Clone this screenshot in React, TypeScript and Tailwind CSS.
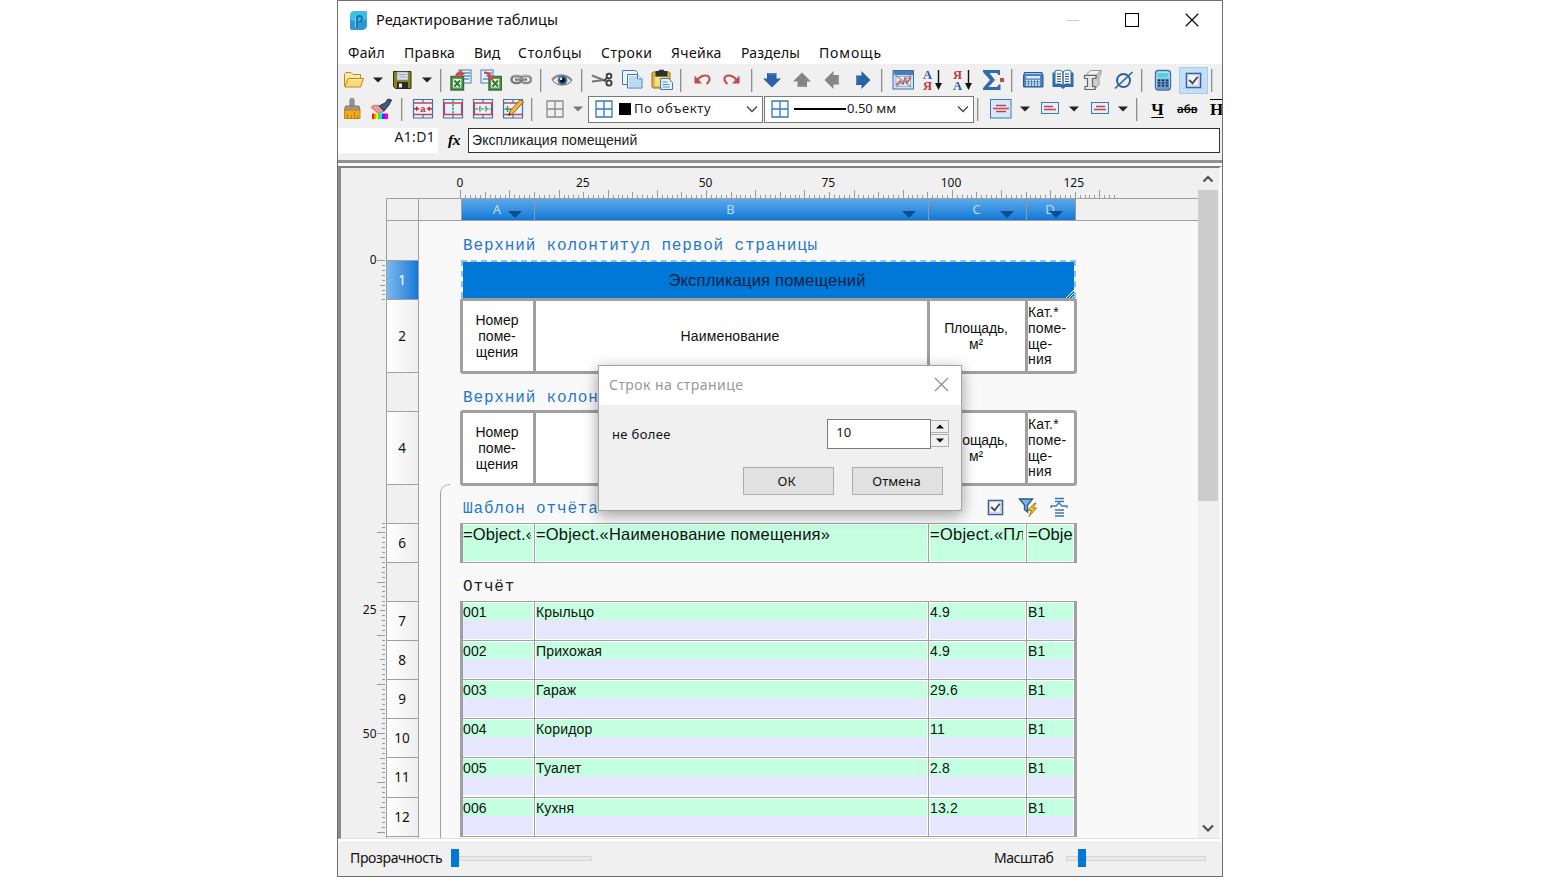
import type { ReactNode } from "react";

const MENU = [
  { label: "Файл", cls: "w-[56px] tracking-[0.200px]" },
  { label: "Правка", cls: "w-[70px] tracking-[0.300px]" },
  { label: "Вид", cls: "w-[44px]" },
  { label: "Столбцы", cls: "w-[83px] tracking-[0.700px]" },
  { label: "Строки", cls: "w-[70px] tracking-[0.500px]" },
  { label: "Ячейка", cls: "w-[70px] tracking-[0.350px]" },
  { label: "Разделы", cls: "w-[78px] tracking-[0.200px]" },
  { label: "Помощь", cls: "w-[70px] tracking-[0.850px]" },
];

const REPORT = [
  { id: "001", name: "Крыльцо", area: "4.9", cat: "B1", h: "h-[39px]" },
  { id: "002", name: "Прихожая", area: "4.9", cat: "B1", h: "h-[39px]" },
  { id: "003", name: "Гараж", area: "29.6", cat: "B1", h: "h-[39px]" },
  { id: "004", name: "Коридор", area: "11", cat: "B1", h: "h-[39px]" },
  { id: "005", name: "Туалет", area: "2.8", cat: "B1", h: "h-[40px]" },
  { id: "006", name: "Кухня", area: "13.2", cat: "B1", h: "h-[39px]" },
];

const ROW_HEADS = [
  { n: "", h: "h-[40px]" },
  { n: "1", h: "h-[39px]" },
  { n: "2", h: "h-[73px]" },
  { n: "", h: "h-[39px]" },
  { n: "4", h: "h-[73px]" },
  { n: "", h: "h-[39px]" },
  { n: "6", h: "h-[39px]" },
  { n: "", h: "h-[39px]" },
  { n: "7", h: "h-[39px]" },
  { n: "8", h: "h-[39px]" },
  { n: "9", h: "h-[39px]" },
  { n: "10", h: "h-[39px]" },
  { n: "11", h: "h-[40px]" },
  { n: "12", h: "h-[39px]" },
];

// vertical scale is broken by the section captions
const V_SEGMENTS = [
  { from: 0, to: 8, y: 92 },
  { from: 8, to: 24, y: 354.5 },
  { from: 24, to: 70, y: 437.2 },
];

function Svg({ children, w = 22, h = 22, cls = "" }: { children: ReactNode; w?: number; h?: number; cls?: string }) {
  return (
    <svg width={w} height={h} viewBox={`0 0 ${w} ${h}`} fill="none" className={`shrink-0 ${cls}`}>
      {children}
    </svg>
  );
}

function Sep({ cls = "" }: { cls?: string }) {
  return <div className={`h-[23px] w-[2px] shrink-0 border-r border-[#d0d0d0] bg-[#8d8d8d] ${cls}`} />;
}

function Caret({ color = "#222", cls = "" }: { color?: string; cls?: string }) {
  return (
    <Svg w={10} h={6} cls={cls}>
      <path d="M0 .5h10L5 5.5z" fill={color} />
    </Svg>
  );
}

function Chevron({ dir = "down", color = "#444", w = 1.3 }: { dir?: "down" | "up"; color?: string; w?: number }) {
  return (
    <Svg w={12} h={8}>
      <path d={dir === "down" ? "M1 1.500l5 5 5-5" : "M1.500 6.500L6 2l4.500 4.500"} stroke={color} strokeWidth={w} />
    </Svg>
  );
}

function FolderIcon() {
  return (
    <Svg>
      <path d="M1.500 17V5.500L3 3.500h5l2 2h7.500v4" fill="#fbe9a8" stroke="#b98a1e" />
      <path d="M1.800 18L5 9.500h15.500l-3 8.500z" fill="#fdd97a" stroke="#b98a1e" strokeLinejoin="round" />
      <path d="M6 10.800h13" stroke="#fff2c0" />
    </Svg>
  );
}

function SaveIcon() {
  return (
    <Svg>
      <path d="M2.500 2.500h17.500v17H4.500l-2-2z" fill="#85851f" stroke="#2e2e10" />
      <rect x="6" y="3" width="11" height="8" fill="#dfe6ee" stroke="#888" strokeWidth=".6" />
      <path d="M7.500 5.500h8M7.500 8h8" stroke="#8fa6c4" />
      <rect x="6" y="13" width="11" height="6.500" fill="#2b2b2b" />
      <rect x="8" y="14.500" width="3" height="4" fill="#f2f2f2" />
    </Svg>
  );
}

function ExcelIcon({ out }: { out?: boolean }) {
  const bx = out ? 1 : 9;
  const px = out ? 9 : 1;
  return (
    <Svg>
      <rect x={px} y="1" width="12" height="13" fill="#eef5ff" stroke="#4478b4" />
      <path d={`M${px + 5} 4h6M${px + 5} 7h6M${px + 2} 10h8`} stroke="#5b8fd0" strokeWidth="1.300" />
      <rect x={bx} y="7.500" width="12.500" height="13.500" fill="#5c9955" stroke="#2f6a31" strokeWidth="1.400" />
      <rect x={bx + 2.2} y="10" width="8" height="8.500" fill="#e9f6e4" />
      <path d={`M${bx + 3.5} 11.500l5.500 6M${bx + 9} 11.500l-5.500 6`} stroke="#2c7a35" strokeWidth="1.900" />
      {out ? (
        <path d="M5 8.500c0-4 2-5.500 5-5.500V.5l5 4.200-5 4V6C8.500 6 7.500 6.500 7 8.500z" fill="#cf4a4f" />
      ) : (
        <path d="M4 2.500c4 0 6.500 1 7.500 4.500l2.200-1-.7 6-5.500-2.500 2-1C8.500 6 7 4.800 4 4.800z" fill="#cf4a4f" />
      )}
    </Svg>
  );
}

function LinkIcon() {
  return (
    <Svg>
      <rect x="1.500" y="7" width="10" height="7" rx="3.500" stroke="#7a7a7a" strokeWidth="2.400" />
      <rect x="11" y="7" width="10" height="7" rx="3.500" stroke="#8b8b8b" strokeWidth="2.400" />
      <path d="M5 10.500h12" stroke="#5f5f5f" strokeWidth="2.200" />
      <path d="M3 7c1.500-1 5.500-1 7 0M13 7c1.500-1 5-1 6.500 0M6 10h10" stroke="#cfcfcf" strokeWidth=".8" />
    </Svg>
  );
}

function EyeIcon() {
  return (
    <Svg>
      <path d="M1.500 11.500C5 6 16 5 20.500 12 16 17.500 6 17.500 1.500 11.500z" fill="#e9e9e9" stroke="#666" />
      <path d="M1 10.500C5 4.500 16 4 21 11.500" stroke="#8a8a8a" strokeWidth="1.600" />
      <circle cx="11.500" cy="11.200" r="4.800" fill="#3f6a94" />
      <circle cx="11.500" cy="11.200" r="2.700" fill="#0b1a2b" />
      <circle cx="10" cy="9.800" r="1.200" fill="#fff" />
    </Svg>
  );
}

function ScissorsIcon() {
  return (
    <Svg>
      <path d="M1 6.500l14 5.500M1 12.500l13-1.500" stroke="#777" strokeWidth="2" />
      <circle cx="18" cy="7" r="2.400" stroke="#3a3a3a" strokeWidth="1.800" />
      <circle cx="18" cy="14" r="2.600" stroke="#3a3a3a" strokeWidth="1.800" />
      <path d="M13 12l3-3.500" stroke="#3a3a3a" strokeWidth="1.800" />
    </Svg>
  );
}

function CopyIcon() {
  return (
    <Svg>
      <path d="M1.500 1.500h13l2 2v12h-15z" fill="#e9f4fe" stroke="#3d78b8" />
      <path d="M6.500 5.500h10l4.500 4.500v9h-14.500z" fill="#f4faff" stroke="#3d78b8" />
      <path d="M8 7h8v4h4v7H8z" fill="#b9dbf6" />
      <path d="M16.500 5.500v4.500h4.500" fill="#fff" stroke="#3d78b8" />
    </Svg>
  );
}

function PasteIcon() {
  return (
    <Svg>
      <rect x="1" y="3" width="18" height="16" rx="1.500" fill="#dcb93f" stroke="#93741c" />
      <path d="M4.500 2h3L8.500.8h4L13.500 2h3v5.500h-12z" fill="#2f2f2f" />
      <rect x="4" y="8" width="12" height="9" fill="#f6df85" />
      <path d="M9.500 9.500h8l4 4v7h-12z" fill="#e4f1fd" stroke="#3d78b8" />
      <path d="M11.500 13h5M11.500 15.500h7M11.500 18h7" stroke="#5b8fd0" />
    </Svg>
  );
}

function UndoIcon({ flip }: { flip?: boolean }) {
  return (
    <Svg cls={flip ? "-scale-x-100" : ""}>
      <path d="M6 11.500C9 6.500 16 5 18 8c1.500 3 0 5-2.500 7" stroke="#c5484c" strokeWidth="2" />
      <path d="M3.500 6.500v8H11z" fill="#c5484c" />
    </Svg>
  );
}

function ArrowIcon({ cls = "", blue }: { cls?: string; blue?: boolean }) {
  return (
    <Svg cls={cls}>
      <path d="M6 4h9.500v5.500h4.500L11 18.500 2 9.500h4z" fill={blue ? "#2c62a8" : "#858585"} />
      <path d="M7 4.800h7.500" stroke={blue ? "#5b8ccb" : "#9c9c9c"} strokeWidth="1.200" />
    </Svg>
  );
}

function PictureIcon() {
  return (
    <Svg>
      <rect x="1" y="1.500" width="20.500" height="18.500" fill="#cfe4f6" stroke="#3a6ea8" />
      <rect x="1.500" y="2" width="19.500" height="4" fill="#4a80ba" />
      <path d="M4 7.500h14.500v10H4z" fill="#e9eef6" stroke="#88a" strokeWidth=".6" />
      <path d="M4 16l4-4 3 3 2-6 2 5 4-6" stroke="#c9474b" strokeWidth="1.400" />
      <path d="M2 5l17 13M19 6L4 18" stroke="#8a9bb0" strokeWidth="1.300" />
    </Svg>
  );
}

function SortIcon({ a, b, up, down }: { a: string; b: string; up: string; down: string }) {
  return (
    <Svg>
      <text x="5.500" y="10" textAnchor="middle" fontFamily="Liberation Serif" fontWeight="700" fontSize="12.500" fill={up}>{a}</text>
      <text x="5.500" y="20.500" textAnchor="middle" fontFamily="Liberation Serif" fontWeight="700" fontSize="12.500" fill={down}>{b}</text>
      <path d="M16.500 1v16" stroke="#111" strokeWidth="1.400" />
      <path d="M13 14h7l-3.500 7z" fill="#111" />
    </Svg>
  );
}

function SigmaIcon() {
  return (
    <Svg>
      <path d="M1 1h17v5h-1.500L15 4H7.500l5.500 7-6.500 7H15l1.800-2.500H18.500V21H1v-2l7-8-7-8z" fill="#2f6ca8" />
      <rect x="18" y="9" width="4" height="4" fill="#c9474b" />
    </Svg>
  );
}

function KeypadIcon() {
  return (
    <Svg>
      <path d="M2.500 3.500h17.500l1 3V18h-19.500V6.500z" fill="#4a82c2" stroke="#23558f" strokeLinejoin="round" />
      <path d="M3 4.500h16.500" stroke="#a9cbee" />
      <rect x="4" y="7" width="14" height="2.500" fill="#dbeafa" />
      {[11.5, 13.8, 16].map((y) => (
        <path key={y} d={`M4 ${y}h14`} stroke="#e6f1fc" strokeWidth="1.300" strokeDasharray="2 1" />
      ))}
    </Svg>
  );
}

function BookIcon() {
  return (
    <Svg>
      <path d="M.5 3.500h21v14.500h-8l-2.500 2-2.500-2H.5z" fill="#2f6cab" />
      <path d="M3 2c3-1.500 6-1 8 1v13.500c-2-2-5-2-8-1zM19 2c-3-1.500-6-1-8 1v13.500c2-2 5-2 8-1z" fill="#f2f8fe" stroke="#2f6cab" />
      <path d="M5 5h4M5 7.500h4M5 10h4M5 12.500h4M13 5h4M13 7.500h4M13 10h4M13 12.500h4" stroke="#444" />
    </Svg>
  );
}

function BeamIcon() {
  return (
    <Svg>
      <path d="M3.500 6l5-4.500H19L15 6z" fill="#f0f0f0" stroke="#9a9a9a" />
      <path d="M15 6l4-4.500v4l-2 2.500v7.500L13 20v-3l-2.500 1V9.500L15 9z" fill="#cfcfcf" stroke="#9a9a9a" />
      <path d="M2.500 6.500h11.500v3H10.500v8H13v3H3v-3h2.500v-8h-3z" fill="#e9e9e9" stroke="#666" strokeWidth="1.200" />
    </Svg>
  );
}

function DiameterIcon() {
  return (
    <Svg>
      <circle cx="10.500" cy="11.500" r="6.500" stroke="#2f6299" strokeWidth="2" />
      <path d="M2 19.500L19.500 3" stroke="#2f6299" strokeWidth="1.700" />
    </Svg>
  );
}

function CalculatorIcon() {
  return (
    <Svg>
      <rect x="3.500" y="1.500" width="15" height="19.500" rx="3" fill="#c6dcf2" stroke="#3c73ad" strokeWidth="1.400" />
      <path d="M5 9.500h12V20H5z" fill="#6f9cca" />
      <rect x="5.500" y="4" width="11" height="4.500" fill="#46d3e6" />
      {[11.3, 14, 16.700].map((y) => (
        <path key={y} d={`M5.800 ${y}h11`} stroke="#16355c" strokeWidth="1.700" strokeDasharray="2.500 1.500" />
      ))}
    </Svg>
  );
}

function CheckIcon({ s = 18 }: { s?: number }) {
  return (
    <svg width={s} height={s} viewBox="0 0 18 18" fill="none" className="shrink-0">
      <rect x="1.500" y="1.500" width="15" height="15" fill="#cdd6f0" stroke="#3d6296" strokeWidth="1.500" />
      <path d="M3.500 3.500h10v10h-10z" fill="#f6f8fd" />
      <path d="M4.500 8.500L8 12l5.500-7" stroke="#4a4a4a" strokeWidth="2" />
    </svg>
  );
}

function BrushIcon() {
  return (
    <Svg>
      <path d="M8 2q0-1.500 2-1.500t2 1.500v6H8z" fill="#9a9a9a" stroke="#777" />
      <path d="M3.500 8h13.500l1 4H2.500z" fill="#999" stroke="#777" />
      <path d="M2.500 12h15.500v8.500h-15.500z" fill="#f0ab1c" stroke="#c48812" />
      <path d="M5.500 21v-5M9.500 21v-4M12.500 21v-7M15.500 21v-4" stroke="#b57b0e" />
    </Svg>
  );
}

function PaletteIcon() {
  const hues = ["#ff1e00", "#ff9a00", "#fff000", "#2cff00", "#00e6ff", "#1448ff", "#b400ff", "#ff00a0"];
  return (
    <Svg>
      {hues.map((c, i) => (
        <rect key={c} x={2 + i * 2} y="15.500" width="2" height="5.500" fill={c} />
      ))}
      <path d="M1 9.500c2-3 7-3 9.500-.5l4 4-6 2.500-3-2.500z" fill="#e99a9a" stroke="#c07070" />
      <path d="M9 8l6-3 3-4 3.500 1-2.500 5-5 6z" fill="#3c5a80" stroke="#20364f" />
    </Svg>
  );
}

function TableIcon({ kind }: { kind: "text" | "cols" | "cells" | "edit" }) {
  return (
    <Svg>
      <rect x="1" y="1.500" width="20" height="18.500" fill="#e6f2fd" />
      <path d="M1.500 1.500v18.500M20.500 1.500v18.500M1 1.500h20M1 20h20M11 1.500v3M11 16.500v3" stroke="#3a74b0" strokeWidth="1.200" />
      <path d="M1 5h20M1 16.500h20" stroke="#cc4147" strokeWidth="1.500" />
      {kind === "text" && (
        <>
          <path d="M2 10.800h4M16 10.800h4" stroke="#cc2a30" strokeWidth="1.600" />
          <path d="M4 8.300l3.500 2.500L4 13.300zM18 8.300l-3.500 2.500 3.500 2.500z" fill="#cc2a30" />
          <text x="11" y="13.800" textAnchor="middle" fontFamily="Liberation Sans" fontWeight="700" fontSize="9.500" fill="#cc2a30">a</text>
        </>
      )}
      {kind === "cols" && (
        <>
          <path d="M2.500 5v11.500M19.500 5v11.500" stroke="#cc4147" strokeWidth="1.200" />
          <path d="M11 6v9.500" stroke="#3f8f4b" strokeWidth="1.400" strokeDasharray="2.500 1" />
        </>
      )}
      {kind === "cells" && (
        <>
          <path d="M2.500 5v11.500M19.500 5v11.500" stroke="#cc4147" strokeWidth="1.200" />
          <path d="M3.500 10.800H8M14 10.800h4.500M8 8v5.500M14 8v5.500M9 10.800h4" stroke="#3f8f4b" strokeWidth="1.300" strokeDasharray="2.500 1" />
        </>
      )}
      {kind === "edit" && (
        <>
          <path d="M2.500 11h7M5.500 8v6" stroke="#3f8f4b" strokeWidth="1.300" />
          <path d="M18.500 1.500l3 2.500L11 15.500l-4.500 2 1.500-4.500z" fill="#f2b93a" stroke="#8a5c12" />
          <path d="M6.500 17.500l.8-2.500 1.700 1.300z" fill="#222" />
        </>
      )}
    </Svg>
  );
}

function GridIcon({ color }: { color: string }) {
  return (
    <Svg w={18} h={18}>
      <path d="M1 1h16v16H1zM9 1v16M1 9h16" stroke={color} strokeWidth="1.300" fill={color === "#8a8a8a" ? "none" : "#f4faff"} />
    </Svg>
  );
}

function AlignIcon({ big, shift = 0 }: { big?: boolean; shift?: number }) {
  return big ? (
    <Svg w={22} h={20}>
      <rect x=".5" y=".5" width="20.500" height="18.500" fill="#d5e8fa" stroke="#3d78b8" />
      <path d="M6 6.500h10M3 9.500h16M6 12.500h10" stroke="#cc4147" strokeWidth="1.400" />
    </Svg>
  ) : (
    <Svg w={18} h={14}>
      <rect x=".5" y="1.500" width="17" height="11" fill="#e3f0fc" stroke="#3d78b8" />
      <path d={`M${3 + shift} 5.500h9M3 8.500h12`} stroke="#cc4147" strokeWidth="1.300" />
    </Svg>
  );
}

function Logo() {
  return (
    <Svg w={19} h={21}>
      <path d="M5.500 1H18v13q0 6-6 6H3.500Q1 20 1 17.500V6q0-5 4.500-5z" fill="#3fbdea" />
      <path d="M1 10q9 3 17-1v5q0 6-6 6H3.500Q1 20 1 17.500z" fill="#2f96d2" />
      <path d="M8 17V8.500Q8 6 10.500 6T13 8.500 10.500 12" stroke="#1c6ea6" strokeWidth="1.800" />
      <path d="M6.500 17V8" stroke="#8fdcf5" strokeWidth=".9" />
    </Svg>
  );
}

function HRuler() {
  const ticks = Array.from({ length: 134 }, (_, v) => v);
  return (
    <svg width="811" height="30" className="block">
      {ticks.map((v) => {
        const x = Math.round(74.3 + v * 4.915) + 0.5;
        const len = v % 10 === 0 ? 8 : v % 5 === 0 ? 6 : 3;
        return <path key={v} d={`M${x} 30v-${len}`} stroke="#9a9a9a" />;
      })}
      {[0, 25, 50, 75, 100, 125].map((v) => (
        <text key={v} x={74 + v * 4.91} y="19" textAnchor="middle" fontFamily="Noto Sans" fontSize="12" fill="#111">
          {v}
        </text>
      ))}
    </svg>
  );
}

function VRuler() {
  return (
    <svg width="45" height="671" className="block shrink-0">
      {V_SEGMENTS.map((s) =>
        Array.from({ length: s.to - s.from + 1 }, (_, i) => s.from + i).map((v) => {
          const y = Math.round(s.y + (v - s.from) * 4.92) + 0.5;
          const len = v % 10 === 0 ? 8 : v % 5 === 0 ? 5 : 3;
          return <path key={`${s.y}-${v}`} d={`M44 ${y}h-${len}`} stroke="#9a9a9a" />;
        })
      )}
      <text x="35.500" y="96" textAnchor="end" fontFamily="Noto Sans" fontSize="12" fill="#111">0</text>
      <text x="35.500" y="446" textAnchor="end" fontFamily="Noto Sans" fontSize="12" fill="#111">25</text>
      <text x="35.500" y="570" textAnchor="end" fontFamily="Noto Sans" fontSize="12" fill="#111">50</text>
    </svg>
  );
}

function ColHead({ label, cls }: { label: string; cls: string }) {
  return (
    <div className={`relative h-[21px] border-r border-[#8f9aa5] bg-linear-to-b from-[#5aa9ea] to-[#0a78d6] pr-[2px] text-center font-['Noto_Sans'] text-[13px] leading-[21px] text-[#b5dcfb] ${cls}`}>
      {label}
      <svg width="14" height="7" className="absolute right-[12px] top-[12px]">
        <path d="M0 0h14L7 7z" fill="#0a4f93" />
      </svg>
    </div>
  );
}

function Caption({ children, cls = "" }: { children: ReactNode; cls?: string }) {
  return (
    <div className={`flex items-center whitespace-pre pl-[3px] font-['Liberation_Mono'] text-[16px] leading-5 tracking-[0.840px] ${cls}`}>
      {children}
    </div>
  );
}

function HeaderRow() {
  return (
    <div className="flex h-[76px] w-[617px] rounded-[3px] border-[3px] border-[#a0a0a0] bg-white text-center font-['Liberation_Sans'] text-[14px] leading-[15.700px] text-[#111]">
      <div className="flex w-[73px] items-center justify-center border-r-[3px] border-[#a0a0a0] pr-[2px] pt-[2px]">
        Номер<br />поме-<br />щения
      </div>
      <div className="flex w-[394px] items-center justify-center border-r-[3px] border-[#a0a0a0] pr-[3px] pt-[2px] tracking-[0.150px]">Наименование</div>
      <div className="flex w-[98px] items-center justify-center border-r-[3px] border-[#a0a0a0] pr-[3px] pt-[2px] tracking-[-0.150px]">
        <p>Площадь,<br />м²</p>
      </div>
      <div className="flex items-center pt-px text-left tracking-[0.200px]">
        <p>Кат.*<br />поме-<br />ще-<br />ния</p>
      </div>
    </div>
  );
}

function FormulaCell({ children, cls }: { children: ReactNode; cls: string }) {
  return (
    <div className={`border border-white bg-[#c4ffe0] ${cls}`}>
      <div className="overflow-hidden whitespace-nowrap">{children}</div>
    </div>
  );
}

function ReportCell({ children, cls }: { children: ReactNode; cls: string }) {
  return (
    <div className={`border-r border-[#a0a0a0] p-px ${cls}`}>
      <div className="h-[17px] bg-[#c4ffe0] leading-[18px]">{children}</div>
      <div className="h-[19px] bg-[#e6e6ff]" />
    </div>
  );
}

function Sheet() {
  return (
    <div className="flex h-[618px] w-[779px] overflow-hidden bg-[#f9f9f9]">
      <div className="w-[41px] shrink-0 pl-[21px] pt-[263px]">
        <div className="h-[400px] w-[11px] rounded-tl-[9px] border-l border-t border-[#a0a0a0] [mask-image:linear-gradient(to_right,black_80%,transparent)]" />
      </div>
      <div className="flex w-[617px] shrink-0 flex-col">
        <Caption cls="h-[39px] shrink-0 pt-[11px] text-[#2878c8]">Верхний колонтитул первой страницы</Caption>
        <div className="relative ml-px h-[38px] w-[615px] shrink-0 border-2 border-b-0 border-dashed border-[#8cc0e8] bg-white">
          <div className="flex h-full items-center justify-center bg-[#0078d7] pr-[3px] font-['Liberation_Sans'] text-[16.500px] tracking-[0.200px] text-[#06213f]">
            Экспликация помещений
          </div>
          <svg width="8" height="8" className="absolute bottom-0 right-0">
            <path d="M0 8L8 0M3 8l5-5M6 8l2-2" stroke="#fff" />
          </svg>
        </div>
        <div className="shrink-0">
          <HeaderRow />
        </div>
        <Caption cls="h-[36px] shrink-0 pt-[11px] text-[#2878c8]">Верхний колонтитул</Caption>
        <div className="shrink-0">
          <HeaderRow />
        </div>
        <Caption cls="h-[37px] shrink-0 pt-[9px] text-[#2878c8]">
          <span className="w-[524px]">Шаблон отчёта</span>
          <div className="flex items-center gap-[14px] pb-[4px]">
            <CheckIcon s={17} />
            <svg width="20" height="20" viewBox="0 0 20 20">
              <path d="M1.500 2h13l-5 6v7l-3-2.500V8z" fill="#7fb4e4" stroke="#27598f" strokeWidth="1.400" />
              <path d="M16.500 6l-7 7.500h4l-2.500 6 7.500-8.500h-3.500l3-5z" fill="#f5c21c" stroke="#8a6508" strokeWidth=".8" />
            </svg>
            <svg width="18" height="20" viewBox="0 0 18 20" fill="none" className="-ml-[2px]" stroke="#3a78b4" strokeWidth="1.300">
              <path d="M5 1.500h9M5 4.500h9M1 11V9h5l3-3 3 3h5v2M5 13h9M5 16h9M5 19h9" />
            </svg>
          </div>
        </Caption>
        <div className="flex h-[40px] w-[617px] shrink-0 gap-px border-x-[3px] border-y border-[#a0a0a0] bg-[#a0a0a0] font-['Liberation_Sans'] text-[16.500px] leading-[19px] text-[#111]">
          <FormulaCell cls="w-[71px] border-l-0 pr-[2px] tracking-[0.100px]">=Object.«Номер</FormulaCell>
          <FormulaCell cls="w-[393px] tracking-[0.200px]">=Object.«Наименование помещения»</FormulaCell>
          <FormulaCell cls="w-[97px] pr-[2px] tracking-[0.250px]">=Object.«Площадь»</FormulaCell>
          <FormulaCell cls="w-[47px] tracking-[0.050px]">=Obje</FormulaCell>
        </div>
        <Caption cls="h-[38px] shrink-0 pt-[10px] text-[#222]">Отчёт</Caption>
        <div className="w-[617px] shrink-0 border-x-[3px] border-t border-[#a0a0a0] bg-white font-['Liberation_Sans'] text-[14px] tracking-[0.150px] text-[#111]">
          {REPORT.map((r) => (
            <div key={r.id} className={`flex border-b border-[#a0a0a0] ${r.h}`}>
              <ReportCell cls="w-[72px] pl-0">{r.id}</ReportCell>
              <ReportCell cls="w-[394px]">{r.name}</ReportCell>
              <ReportCell cls="w-[98px]">{r.area}</ReportCell>
              <ReportCell cls="w-[47px] border-r-0">{r.cat}</ReportCell>
            </div>
          ))}
        </div>
      </div>
    </div>
  );
}

function Dialog() {
  return (
    <div className="absolute left-[260px] top-[364px] h-[146px] w-[364px] border border-[#a3a3a3] bg-[#f0f0f0] font-['Noto_Sans'] text-[13px] text-[#111] shadow-[0_4px_14px_rgba(0,0,0,0.38)]">
      <div className="flex h-[39px] items-center justify-between bg-white pl-[10px] pr-[12px] text-[14px] text-[#999]">
        <span className="-mt-[2px] tracking-[0.450px]">Строк на странице</span>
        <Svg w={15} h={15} cls="-mt-[3px]">
          <path d="M1 1l13 13M14 1L1 14" stroke="#8a8a8a" strokeWidth="1.100" />
        </Svg>
      </div>
      <div className="flex pl-[13px] pr-[12px] pt-[14px]">
        <span className="w-[216px] pt-[6px] tracking-[0.350px]">не более</span>
        <div className="h-[30px] w-[104px] border border-[#7a7a7a] bg-white pl-[8px] pt-[3px]">10</div>
        <div className="flex w-[18px] flex-col gap-px pt-px">
          <div className="flex h-[13px] items-center justify-center border border-l-0 border-[#b0b0b0]">
            <Svg w={8} h={5}><path d="M0 4.500h8L4 .5z" fill="#111" /></Svg>
          </div>
          <div className="flex h-[13px] items-center justify-center border border-l-0 border-[#b0b0b0]">
            <Svg w={8} h={5}><path d="M0 .5h8L4 4.500z" fill="#111" /></Svg>
          </div>
        </div>
      </div>
      <div className="flex justify-end gap-[18px] pr-[18px] pt-[18px]">
        <button className="h-[28px] w-[91px] border border-[#adadad] bg-[#e1e1e1] pr-1 pt-px">ОК</button>
        <button className="h-[28px] w-[91px] border border-[#adadad] bg-[#e1e1e1] pr-[2px] pt-px">Отмена</button>
      </div>
    </div>
  );
}

function TopToolbar() {
  return (
    <div className="flex h-[32px] shrink-0 items-center gap-2 overflow-hidden pl-[5px]">
      <FolderIcon />
      <Caret />
      <SaveIcon />
      <Caret cls="ml-px" />
      <Sep />
      <ExcelIcon out />
      <ExcelIcon />
      <LinkIcon />
      <Sep />
      <div className="mx-px flex"><EyeIcon /></div>
      <Sep cls="-ml-px" />
      <ScissorsIcon />
      <CopyIcon />
      <PasteIcon />
      <Sep cls="-ml-px" />
      <div className="ml-px flex"><UndoIcon /></div>
      <UndoIcon flip />
      <Sep />
      <ArrowIcon blue />
      <ArrowIcon cls="rotate-180" />
      <ArrowIcon cls="rotate-90" />
      <ArrowIcon cls="-rotate-90 ml-px" blue />
      <Sep cls="-ml-px" />
      <div className="ml-px flex"><PictureIcon /></div>
      <SortIcon a="А" b="Я" up="#2b5c9e" down="#c0393f" />
      <SortIcon a="Я" b="А" up="#c0393f" down="#2b5c9e" />
      <SigmaIcon />
      <Sep cls="-ml-px" />
      <div className="ml-px flex"><KeypadIcon /></div>
      <BookIcon />
      <BeamIcon />
      <div className="ml-px flex"><DiameterIcon /></div>
      <Sep cls="-ml-[2px]" />
      <div className="ml-px flex"><CalculatorIcon /></div>
      <div className="-ml-[3px] flex h-[27px] w-[29px] shrink-0 items-center justify-center border border-[#a5cdf0] bg-[#c2e0f8]">
        <CheckIcon s={17} />
      </div>
      <Sep cls="-ml-[5px]" />
    </div>
  );
}

function FormatToolbar() {
  return (
    <div className="-mt-px flex h-[28px] shrink-0 items-center overflow-hidden pl-[4px]">
      <BrushIcon />
      <div className="ml-[6px] flex"><PaletteIcon /></div>
      <Sep cls="ml-[9px]" />
      <div className="ml-[9px] flex gap-2">
        <TableIcon kind="text" />
        <TableIcon kind="cols" />
        <TableIcon kind="cells" />
        <TableIcon kind="edit" />
      </div>
      <Sep cls="ml-[7px]" />
      <div className="ml-[13px] flex items-center gap-[9px]">
        <GridIcon color="#8a8a8a" />
        <Caret color="#777" />
      </div>
      <div className="ml-[5px] flex h-[27px] w-[175px] shrink-0 items-center border border-[#7a7a7a] bg-white pl-[6px] pr-[4px] font-['Noto_Sans'] text-[13px] text-[#222]">
        <GridIcon color="#3d78b8" />
        <div className="ml-[6px] h-[12px] w-[12px] bg-black" />
        <span className="ml-[3px] flex-1 tracking-[0.650px]">По объекту</span>
        <Chevron />
      </div>
      <div className="ml-px flex h-[27px] w-[210px] shrink-0 items-center border border-[#7a7a7a] bg-white pl-[6px] pr-[4px] font-['Noto_Sans'] text-[13px] text-[#222]">
        <GridIcon color="#3d78b8" />
        <div className="ml-[5px] h-[2px] w-[52px] bg-black" />
        <span className="ml-[1px] flex-1">0.50 мм</span>
        <Chevron />
      </div>
      <Sep cls="ml-[3px]" />
      <div className="ml-[11px] flex items-center">
        <AlignIcon big />
        <Caret cls="ml-[8px]" />
        <div className="ml-[11px] -mt-[3px]"><AlignIcon /></div>
        <Caret cls="ml-[10px]" />
        <div className="ml-[12px] -mt-[3px]"><AlignIcon shift={2} /></div>
        <Caret cls="ml-[9px]" />
      </div>
      <Sep cls="ml-[8px]" />
      <span className="ml-[13px] w-[13px] shrink-0 text-center font-['Liberation_Serif'] text-[17px] font-bold leading-[17px] underline decoration-1 underline-offset-2">Ч</span>
      <span className="ml-[13px] w-[21px] shrink-0 font-['Noto_Sans'] text-[11.500px] font-semibold leading-none line-through decoration-[0.5px]">абв</span>
      <span className="ml-[12px] shrink-0 font-['Liberation_Serif'] text-[17px] font-bold leading-[17px] overline decoration-1">Н</span>
    </div>
  );
}

export default function App() {
  return (
    <div className="h-[877px] w-[1560px] overflow-hidden bg-white pl-[337px]">
      <div className="relative flex h-[877px] w-[886px] flex-col border border-[#707070] bg-[#f0f0f0]">
        {/* Caption bar */}
        <div className="flex h-[38px] shrink-0 items-center bg-white pl-[11px] font-['Noto_Sans'] text-[14.500px] text-[#111]">
          <Logo />
          <span className="ml-[8px] flex-1 tracking-[0.050px]">Редактирование таблицы</span>
          <div className="h-px w-[13px] bg-[#ccc]" />
          <div className="ml-[46px] h-[14px] w-[14px] border-[1.500px] border-black" />
          <Svg w={14} h={14} cls="ml-[46px] mr-[23px]">
            <path d="M.7.7l12.600 12.600M13.300.7L.7 13.300" stroke="#111" strokeWidth="1.300" />
          </Svg>
        </div>

        {/* Menu */}
        <div className="flex h-[25px] shrink-0 bg-white pl-[10px] font-['Noto_Sans'] text-[14px] leading-[28px] text-[#111]">
          {MENU.map((m) => (
            <span key={m.label} className={`whitespace-nowrap ${m.cls}`}>{m.label}</span>
          ))}
        </div>

        <TopToolbar />
        <FormatToolbar />

        {/* Formula line */}
        <div className="flex h-[37px] shrink-0 pt-[5px]">
          <div className="h-[25px] w-[100px] bg-white pr-[3px] text-right font-['Noto_Sans'] text-[14px] leading-[18px] tracking-[0.300px] text-[#222]">A1:D1</div>
          <span className="w-[30px] pl-[10px] font-['Liberation_Serif'] text-[15.500px] font-bold italic leading-[23px] tracking-[-0.500px]">fx</span>
          <div className="h-[25px] w-[752px] border border-[#333] bg-white pl-[3px] font-['Liberation_Sans'] text-[14px] leading-[22px] tracking-[0.080px] text-[#222]">
            Экспликация помещений
          </div>
        </div>

        {/* Editor pane */}
        <div className="h-[3px] shrink-0 bg-[#909090]" />
        <div className="h-[3px] shrink-0 bg-[#fafafa]" />
        <div className="flex h-[673px] shrink-0 overflow-hidden border-b border-b-[#e0e0e0] border-l-[3px] border-l-[#8a8a8a] border-r-[3px] border-r-[#fafafa] border-t-2 border-t-[#808080]">
          <VRuler />
          <div className="w-[812px] shrink-0">
            <HRuler />
            <div className="flex h-[23px] border-y border-l border-[#a0a0a0]">
              <div className="w-[32px] border-r border-[#a0a0a0]" />
              <div className="w-[43px] border-r border-[#a0a0a0]" />
              <ColHead label="A" cls="w-[73px]" />
              <ColHead label="B" cls="w-[394px]" />
              <ColHead label="C" cls="w-[98px]" />
              <ColHead label="D" cls="w-[49px]" />
            </div>
            <div className="flex">
              <div className="w-[33px] shrink-0 border-x border-[#a0a0a0]">
                {ROW_HEADS.map((r, i) => (
                  <div
                    key={i}
                    className={`flex items-center justify-center border-b border-[#a0a0a0] pr-px font-['Noto_Sans'] text-[13.500px] ${r.h} ${
                      r.n === "1"
                        ? "bg-linear-to-r from-[#7ab8ee] to-[#0a78d6] text-white"
                        : r.n
                          ? "bg-linear-to-r from-white to-[#eeeeee] text-[#111]"
                          : "bg-[#f0f0f0]"
                    }`}
                  >
                    {r.n}
                  </div>
                ))}
                <div className="h-4 bg-[#f7f7f7]" />
              </div>
              <Sheet />
            </div>
          </div>
          <div className="flex h-full w-[20px] shrink-0 flex-col items-center bg-[#f0f0f0]">
            <div className="flex h-[22px] items-center"><Chevron dir="up" color="#505050" w={2.2} /></div>
            <div className="h-[311px] w-[20px] bg-[#cdcdcd]" />
            <div className="flex-1" />
            <div className="flex h-[20px] items-center"><Chevron color="#505050" w={2.2} /></div>
          </div>
        </div>
        <div className="h-[2px] shrink-0 bg-white" />

        {/* Status bar */}
        <div className="flex flex-1 items-center pb-px pl-[12px] font-['Noto_Sans'] text-[14px] text-[#111]">
          <span className="-mt-px w-[101px] tracking-[-0.350px]">Прозрачность</span>
          <div className="flex h-[18px] w-[141px] items-center">
            <div className="h-[18px] w-[8px] bg-[#0078d7]" />
            <div className="h-[5px] flex-1 border border-[#d6d6d6] bg-[#e7eaea]" />
          </div>
          <span className="-mt-px ml-[402px] w-[72px] tracking-[-0.450px]">Масштаб</span>
          <div className="flex h-[18px] w-[140px] items-center">
            <div className="h-[5px] w-[12px] border border-[#d6d6d6] bg-[#e7eaea]" />
            <div className="h-[18px] w-[8px] bg-[#0078d7]" />
            <div className="h-[5px] flex-1 border border-[#d6d6d6] bg-[#e7eaea]" />
          </div>
        </div>

        <Dialog />
      </div>
    </div>
  );
}
